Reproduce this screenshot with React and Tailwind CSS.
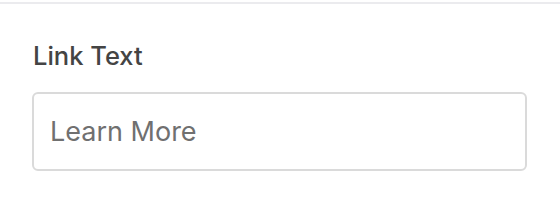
export default function App() {
  return (
    <div className="w-[560px] h-[204px] bg-white" style={{ fontFamily: "Inter, 'Noto Sans', sans-serif" }}>
      <div className="h-[2px]" />
      <div className="h-[2px] bg-[#ebebee]" />
      <div className="px-[32px] pt-[36px]">
        <div className="text-[25.5px] font-medium text-[#444444] leading-[32px] pl-[1px]">Link Text</div>
        <div className="mt-[20px] w-[495px] h-[79px] border-2 border-[#dadada] rounded-[6px] flex items-center pl-[16px]">
          <span className="text-[27px] text-[#707070] leading-none">Learn More</span>
        </div>
      </div>
    </div>
  );
}
